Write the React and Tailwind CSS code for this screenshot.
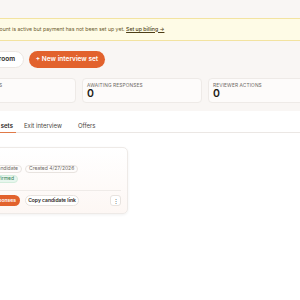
export default function App() {
  return (
    <div className="w-[300px] h-[300px] overflow-hidden bg-white" style={{ fontFamily: "Inter, 'Noto Sans', sans-serif" }}>
      <div className="bg-[#f9f6f4] pt-[18px]">
        <div className="bg-[#fefbe6] border-y border-[#f3e3a0] h-[23px] flex items-center">
          <div className="ml-[-22px] text-[5.2px] text-[#6b5a2c] whitespace-nowrap">
            Your account is active but payment has not been set up yet.{" "}
            <span className="underline font-medium text-[#4d3d16]">Set up billing →</span>
          </div>
        </div>
        <div className="ml-[-44px] w-[372px] pt-[10px]">
          <div className="flex gap-[5px] h-[17px]">
            <div className="w-[68px] rounded-full bg-white border border-[#ece7e3] flex items-center justify-end pr-[8px] text-[6.5px] font-semibold text-[#2a2522] whitespace-nowrap">
              Interview room
            </div>
            <div className="w-[76px] rounded-full bg-[#e2622d] flex items-center justify-center text-[6.5px] font-semibold text-white whitespace-nowrap">
              + New interview set
            </div>
          </div>
          <div className="grid grid-cols-3 gap-[6px] mt-[10px]">
            <div className="h-[25px] rounded-[4px] bg-[#fdfbfa] border border-[#eeeae7] px-[4px] pt-[3px]">
              <div className="text-[4.8px] tracking-wide text-[#6d6863] uppercase leading-[6px]">Interview sets</div>
              <div className="text-[10.5px] font-semibold text-[#1f1b18] leading-[11px]">1</div>
            </div>
            <div className="h-[25px] rounded-[4px] bg-[#fdfbfa] border border-[#eeeae7] px-[4px] pt-[3px]">
              <div className="text-[4.8px] tracking-wide text-[#6d6863] uppercase leading-[6px]">Awaiting responses</div>
              <div className="text-[10.5px] font-semibold text-[#1f1b18] leading-[11px]">0</div>
            </div>
            <div className="h-[25px] rounded-[4px] bg-[#fdfbfa] border border-[#eeeae7] px-[4px] pt-[3px]">
              <div className="text-[4.8px] tracking-wide text-[#6d6863] uppercase leading-[6px]">Reviewer actions</div>
              <div className="text-[10.5px] font-semibold text-[#1f1b18] leading-[11px]">0</div>
            </div>
          </div>
          <div className="h-[8px]" />
        </div>
      </div>
      <div className="ml-[-44px] w-[372px] pt-[7px]">
        <div className="flex border-b border-[#ebe7e4] text-[6px] text-[#4a4542] h-[15px]">
          <div className="pl-[4px] pr-[3px] w-[60px] flex items-center justify-end border-b-[1.5px] border-[#e07a48] mb-[-1px] font-semibold text-[#2a2522]">Interview sets</div>
          <div className="ml-[8px] flex items-center">Exit interview</div>
          <div className="ml-[16px] flex items-center">Offers</div>
        </div>
        <div className="pt-[14px]">
          <div className="w-[172px] rounded-[5px] border border-[#eeeae7] bg-gradient-to-b from-white to-[#fdf7f4] shadow-[0_1px_3px_rgba(0,0,0,0.06)] px-[6px] pt-[7px] pb-[7px]">
            <div className="text-[6.5px] font-semibold text-[#1f1b18] leading-[8px]">Sales hire</div>
            <div className="flex gap-[3px] mt-[2px]">
              <div className="h-[8px] w-[59px] rounded-full border border-[#e8e3df] px-[3px] text-[5px] text-[#6d6863] flex items-center justify-end whitespace-nowrap">1 candidate</div>
              <div className="h-[8px] rounded-full border border-[#e8e3df] px-[3px] text-[5px] text-[#6d6863] flex items-center whitespace-nowrap">Created 4/27/2026</div>
            </div>
            <div className="flex mt-[2px]">
              <div className="h-[8px] w-[55px] rounded-full bg-[#e8f6ee] border border-[#d3eddc] px-[3px] text-[5px] text-[#2f7d4f] flex items-center justify-end whitespace-nowrap">Interview confirmed</div>
            </div>
            <div className="border-t border-[#efebe8] mt-[7px] pt-[4px] flex items-center gap-[5px]">
              <div className="h-[11px] w-[57px] rounded-full bg-[#e2622d] text-white text-[5px] font-semibold flex items-center justify-end pr-[4px] whitespace-nowrap">View responses</div>
              <div className="h-[11px] w-[54px] rounded-full bg-white border border-[#e8e3df] text-[#2a2522] text-[5px] font-semibold flex items-center justify-center whitespace-nowrap">Copy candidate link</div>
              <div className="ml-auto h-[11px] w-[11px] rounded-[3px] bg-white border border-[#e8e3df] text-[#555] text-[6px] flex items-center justify-center">⋮</div>
            </div>
          </div>
        </div>
      </div>
    </div>
  );
}
